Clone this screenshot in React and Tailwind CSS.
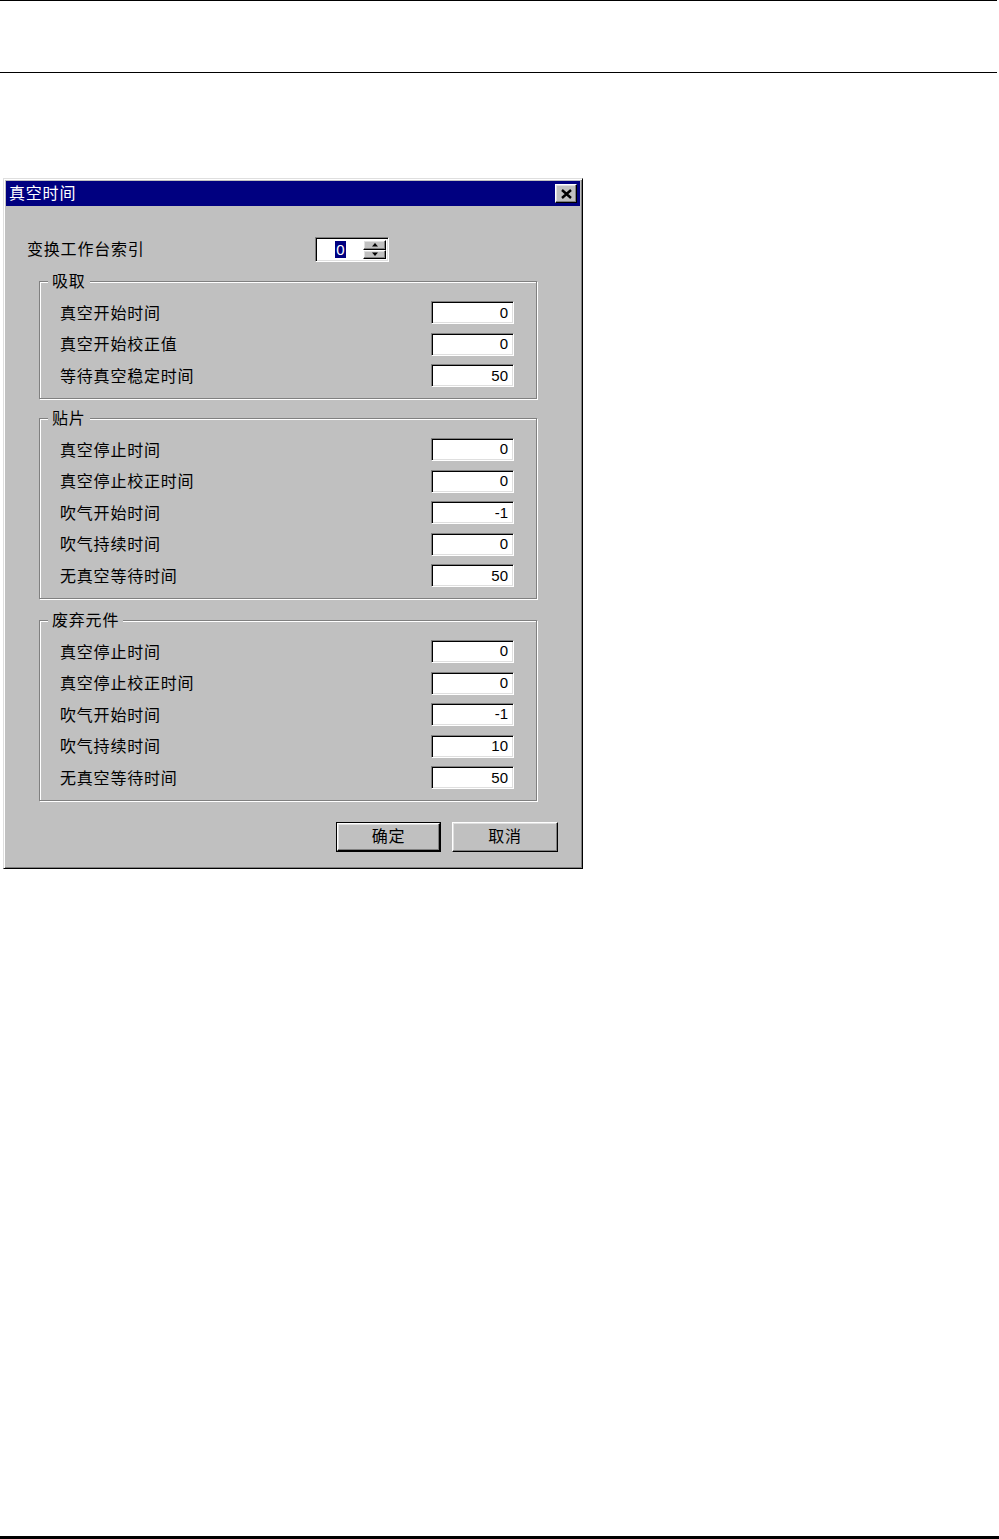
import React from 'react';

const font = { fontFamily: '"Noto Sans CJK SC", "Liberation Sans", sans-serif' };

const groups = [
  {
    title: '吸取',
    rows: [
      ['真空开始时间', '0'],
      ['真空开始校正值', '0'],
      ['等待真空稳定时间', '50'],
    ],
  },
  {
    title: '贴片',
    rows: [
      ['真空停止时间', '0'],
      ['真空停止校正时间', '0'],
      ['吹气开始时间', '-1'],
      ['吹气持续时间', '0'],
      ['无真空等待时间', '50'],
    ],
  },
  {
    title: '废弃元件',
    rows: [
      ['真空停止时间', '0'],
      ['真空停止校正时间', '0'],
      ['吹气开始时间', '-1'],
      ['吹气持续时间', '10'],
      ['无真空等待时间', '50'],
    ],
  },
];

const sunken =
  'border border-t-[#808080] border-l-[#808080] border-b-white border-r-white shadow-[inset_1px_1px_0_#000,inset_-1px_-1px_0_#dfdfdf]';
const raised =
  'border border-t-white border-l-white border-b-black border-r-black shadow-[inset_-1px_-1px_0_#808080,inset_1px_1px_0_#dfdfdf]';

const NumberField = ({ value }) => (
  <div
    className={`w-[83px] h-[23px] bg-white flex items-center justify-end pr-[5px] text-[15px] text-black ${sunken}`}
    style={{ fontFamily: '"Liberation Sans", sans-serif' }}
  >
    {value}
  </div>
);

const GroupBox = ({ title, rows, className }) => (
  <div
    className={`relative ml-[33px] w-[498px] border border-[#808080] shadow-[inset_1px_1px_0_#fff,1px_1px_0_#fff] pt-[15px] pb-[6px] ${className}`}
  >
    <span className="absolute -top-[14px] left-[8px] px-[4px] bg-[#c0c0c0] text-[16px] leading-[24px] tracking-[0.8px] text-black">
      {title}
    </span>
    {rows.map(([label, value], i) => (
      <div key={i} className="h-[31.6px] flex items-center justify-between pl-[20px] pr-[22px]">
        <span className="mb-[2px] text-[16px] leading-[20px] tracking-[0.8px] text-black">{label}</span>
        <NumberField value={value} />
      </div>
    ))}
  </div>
);

const App = () => {
  return (
    <div className="w-[999px] h-[1539px] bg-white flex flex-col" style={font}>
      {/* page header rules */}
      <div className="h-[73px] border-t border-b border-black w-[997px]" />

      {/* dialog */}
      <div className="mt-[105px] ml-[3px] w-[580px] h-[691px] bg-[#c0c0c0] border border-t-[#dfdfdf] border-l-[#dfdfdf] border-b-black border-r-black shadow-[inset_1px_1px_0_#fff,inset_-1px_-1px_0_#808080] p-[2px]">
        {/* title bar */}
        <div className="h-[25px] bg-[#000080] flex items-center justify-between pl-[3px] pr-[3px]">
          <span className="mb-[4px] text-white text-[16px] tracking-[0.8px] leading-[20px]">真空时间</span>
          <div className={`w-[22px] h-[19px] bg-[#c0c0c0] flex items-center justify-center ${raised}`}>
            <svg width="11" height="10" viewBox="0 0 11 10">
              <path d="M1 1 L10 9 M10 1 L1 9" stroke="#000" strokeWidth="2.4" />
            </svg>
          </div>
        </div>

        {/* station index */}
        <div className="mt-[31px] flex items-center h-[25px]">
          <span className="mb-[4px] w-[309px] pl-[21px] text-[16px] leading-[20px] tracking-[0.8px] text-black">
            变换工作台索引
          </span>
          <div className={`w-[74px] h-[25px] bg-white flex ${sunken} p-[2px]`}>
            <div className="flex-1 flex items-center justify-center">
              <span
                className="bg-[#000080] text-white text-[15px] leading-[17px] px-[1px]"
                style={{ fontFamily: '"Liberation Sans", sans-serif' }}
              >
                0
              </span>
            </div>
            <div className="w-[23px] flex flex-col">
              <div className={`flex-1 bg-[#c0c0c0] flex items-center justify-center ${raised}`}>
                <svg width="6" height="4" viewBox="0 0 6 4">
                  <path d="M3 0 L6 3.5 L0 3.5 Z" fill="#000" />
                </svg>
              </div>
              <div className={`flex-1 bg-[#c0c0c0] flex items-center justify-center ${raised}`}>
                <svg width="6" height="4" viewBox="0 0 6 4">
                  <path d="M0 0.5 L6 0.5 L3 4 Z" fill="#000" />
                </svg>
              </div>
            </div>
          </div>
        </div>

        <GroupBox {...groups[0]} className="mt-[19px]" />
        <GroupBox {...groups[1]} className="mt-[19px]" />
        <GroupBox {...groups[2]} className="mt-[21px]" />

        {/* buttons */}
        <div className="mt-[21px] flex justify-end gap-[11px] pr-[22px]">
          <div className="w-[105px] h-[30px] border border-black">
            <div className={`w-full h-full flex items-center justify-center text-[16px] tracking-[0.8px] text-black ${raised}`}>
              <span className="mb-[4px] leading-[20px]">确定</span>
            </div>
          </div>
          <div className={`w-[106px] h-[30px] flex items-center justify-center text-[16px] tracking-[0.8px] text-black ${raised}`}>
            <span className="mb-[4px] leading-[20px]">取消</span>
          </div>
        </div>
      </div>

      <div className="flex-1" />
      <div className="h-[3px] bg-black w-[999px]" />
    </div>
  );
};

export default App;
